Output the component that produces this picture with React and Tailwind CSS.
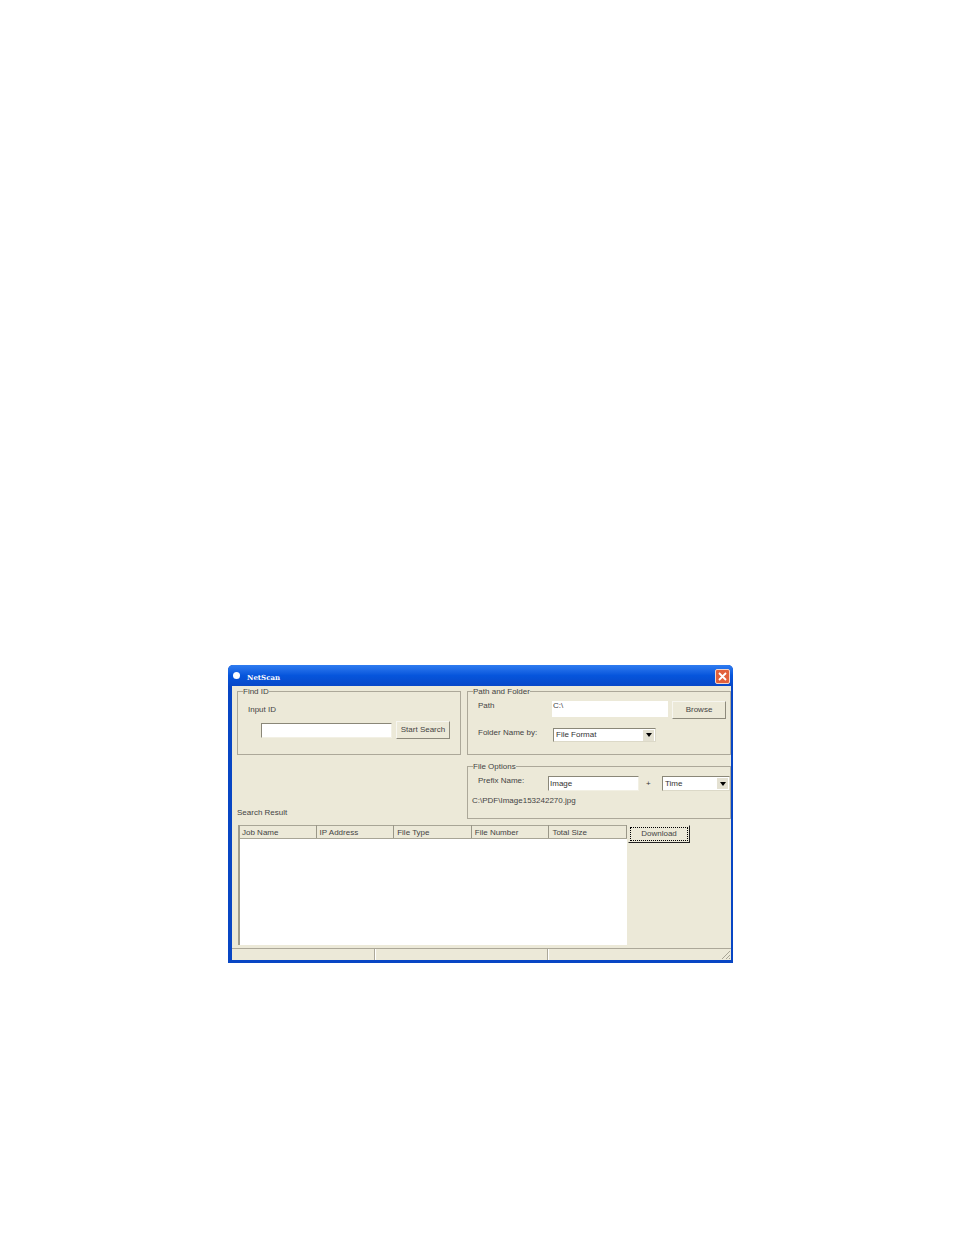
import React from "react";

const columns = ["Job Name", "IP Address", "File Type", "File Number", "Total Size"];

const Button = ({ label, className = "" }) => (
  <button className={`flex items-center justify-center border border-t-[#f7f6f0] border-l-[#f7f6f0] border-r-[#8d8a7c] border-b-[#8d8a7c] bg-[#ece9d8] text-[8px] text-[#444] ${className}`}>
    {label}
  </button>
);

const Select = ({ value, className = "" }) => (
  <div className={`flex items-center justify-between border border-t-[#8a8778] border-l-[#8a8778] border-r-[#dcd9c8] border-b-[#dcd9c8] bg-white pl-[2px] pr-px text-[8px] text-[#333] ${className}`}>
    <span>{value}</span>
    <span className="flex h-[11px] w-[11px] items-center justify-center bg-[#e4e1d2]">
      <span className="h-0 w-0 border-x-[3px] border-t-[4px] border-x-transparent border-t-black" />
    </span>
  </div>
);

const Group = ({ title, className = "", children }) => (
  <fieldset className={`border border-[#aca899] ${className}`}>
    <legend className="ml-[5px] pt-px text-[8px] leading-[10px] text-[#444]">{title}</legend>
    {children}
  </fieldset>
);

const App = () => {
  return (
    <div className="min-h-[1235px] bg-white pl-[228px] pt-[665px] font-['Liberation_Sans',sans-serif]">
      <div className="h-[298px] w-[505px] overflow-hidden rounded-t-[5px] bg-[#0846c4]">
        {/* title bar */}
        <div className="flex h-[21px] items-center justify-between bg-gradient-to-b from-[#2f7cf0] via-[#0655dc] to-[#0848c8] pl-[5px] pr-[3px] pt-[2px]">
          <div className="flex items-center gap-[7px]">
            <span className="mb-[3px] h-[7px] w-[7px] rounded-full bg-white" />
            <span className="pt-[4px] font-['DejaVu_Serif',serif] text-[7px] font-bold text-white">NetScan</span>
          </div>
          <div className="flex h-[15px] w-[15px] items-center justify-center rounded-[2px] border border-[#f3d5c8] bg-[#e2603a]">
            <svg width="11" height="11" viewBox="0 0 11 11">
              <path d="M2 2L9 9M9 2L2 9" stroke="#fff" strokeWidth="1.8" />
            </svg>
          </div>
        </div>

        {/* client area */}
        <div className="ml-[4px] mr-[2px] flex h-[274px] flex-col bg-[#ece9d8]">
          <div className="flex h-[133px]">
            <div className="flex w-[234px] shrink-0 flex-col pl-[5px]">
              <Group title="Find ID" className="h-[69px] w-[224px]">
                <div className="pl-[10px] pt-[8px] text-[8px] leading-[10px] text-[#444]">Input ID</div>
                <div className="mt-[6px] flex items-center pl-[23px]">
                  <div className="h-[15px] w-[131px] border border-t-[#8a8778] border-l-[#8a8778] border-r-[#f2f0e4] border-b-[#f2f0e4] bg-white" />
                  <Button label="Start Search" className="ml-[4px] h-[18px] w-[54px]" />
                </div>
              </Group>
              <div className="mt-auto pb-px text-[8px] leading-[10px] text-[#444]">Search Result</div>
            </div>

            <div className="ml-px flex flex-col">
              <Group title="Path and Folder" className="h-[69px] w-[264px]">
                <div className="flex items-start pl-[10px] pt-[4px]">
                  <span className="w-[74px] text-[8px] leading-[10px] text-[#444]">Path</span>
                  <div className="h-[16px] w-[116px] bg-white pl-px text-[8px] leading-[10px] text-[#444]">C:\</div>
                  <Button label="Browse" className="ml-[4px] h-[18px] w-[54px]" />
                </div>
                <div className="flex items-center pl-[10px] pt-[9px]">
                  <span className="w-[75px] pb-[4px] text-[8px] leading-[10px] text-[#444]">Folder Name by:</span>
                  <Select value="File Format" className="h-[14px] w-[103px]" />
                </div>
              </Group>
              <Group title="File Options" className="mt-[6px] h-[58px] w-[264px]">
                <div className="flex items-center pl-[10px] pt-[4px]">
                  <span className="w-[70px] pb-[5px] text-[8px] leading-[10px] text-[#444]">Prefix Name:</span>
                  <div className="h-[15px] w-[91px] border border-t-[#8a8778] border-l-[#8a8778] border-r-[#f2f0e4] border-b-[#f2f0e4] bg-white pl-px text-[8px] leading-[13px] text-[#333]">Image</div>
                  <span className="ml-[7px] w-[16px] text-[8px] text-[#333]">+</span>
                  <Select value="Time" className="h-[15px] w-[68px]" />
                </div>
                <div className="pl-[4px] pt-[5px] text-[8px] leading-[10px] text-[#444]">C:\PDF\Image153242270.jpg</div>
              </Group>
            </div>
          </div>

          {/* result list */}
          <div className="mt-[6px] flex h-[120px] pl-[6px]">
            <div className="flex w-[389px] flex-col border-l-2 border-[#a09d8e]">
              <div className="flex h-[13px] bg-[#ece9d8] shadow-[inset_0_1px_0_#a8a596]">
                {columns.map((name, i) => (
                  <div key={name} className={`flex-1 border-r border-[#9a9788] pt-[2px] text-[8px] leading-[11px] text-[#444] ${i === 0 ? "pl-[2px]" : "pl-[3px]"}`}>
                    {name}
                  </div>
                ))}
              </div>
              <div className="h-px bg-[#a8a596]" />
              <div className="flex-1 bg-white" />
            </div>
            <div className="ml-px h-[18px] w-[62px] border border-[#222] border-l-[#ece9d8] border-t-[#ece9d8] p-px">
              <div className="flex h-full items-center justify-center border border-dotted border-black text-[8px] text-[#444]">Download</div>
            </div>
          </div>

          {/* status bar */}
          <div className="mt-auto flex h-[12px] border-t border-[#aca899]">
            <div className="w-[143px] border-r border-[#aca899]" />
            <div className="w-[173px] border-l border-r border-l-white border-r-[#aca899]" />
            <div className="flex flex-1 items-end justify-end border-l border-white">
              <svg width="11" height="11" viewBox="0 0 11 11">
                <path d="M10 2L2 10M10 6L6 10M10 9L9 10" stroke="#a8a596" strokeWidth="1" />
              </svg>
            </div>
          </div>
        </div>
      </div>
    </div>
  );
};

export default App;
